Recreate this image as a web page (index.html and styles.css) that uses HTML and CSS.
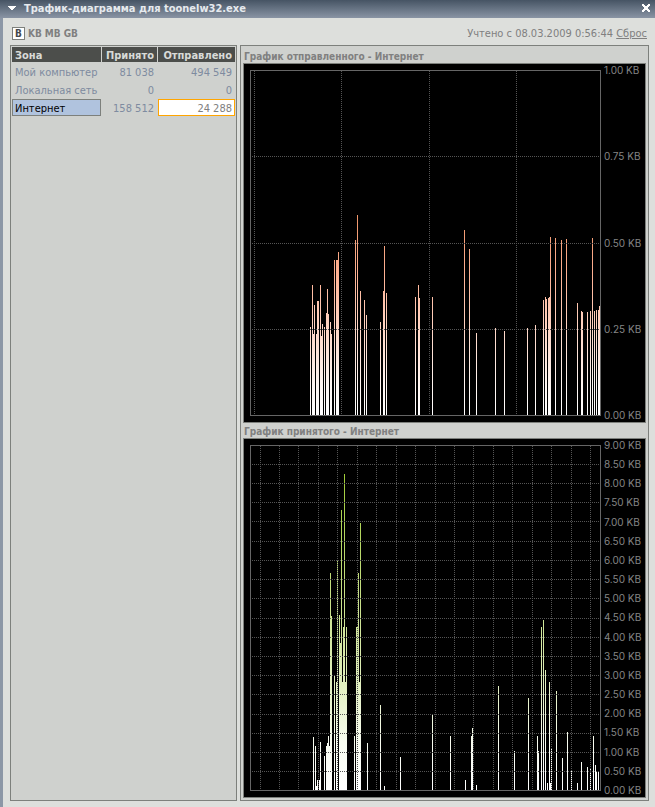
FILE: index.html
```html
<!DOCTYPE html>
<html lang="ru">
<head>
<meta charset="utf-8">
<meta name="viewport" content="width=device-width, initial-scale=1">
<title>Трафик-диаграмма для toonelw32.exe</title>
<link rel="stylesheet" href="styles.css">
</head>
<body>
<header class="titlebar">
  <button class="titlebar-button" type="button" aria-label="Меню">
    <svg width="8" height="5" viewBox="0 0 8 5" shape-rendering="crispEdges"><path d="M0 0h8v1h-1v1h-1v1h-1v1h-2v-1h-1v-1h-1v-1h-1z"/></svg>
  </button>
  <h1 class="titlebar-title">Трафик-диаграмма для toonelw32.exe</h1>
  <button class="titlebar-button" type="button" aria-label="Закрыть">
    <svg width="8" height="8" viewBox="0 0 8 8" shape-rendering="crispEdges"><path d="M0 0h2v1h1v1h2v-1h1v-1h2v2h-1v1h-1v2h1v1h1v2h-2v-1h-1v-1h-2v1h-1v1h-2v-2h1v-1h1v-2h-1v-1h-1z"/></svg>
  </button>
</header>
<main class="window">
  <div class="toolbar">
    <div class="units">
      <button class="unit unit-active" type="button" aria-pressed="true">B</button>
      <button class="unit" type="button">KB</button>
      <button class="unit" type="button">MB</button>
      <button class="unit" type="button">GB</button>
    </div>
    <p class="since">Учтено с 08.03.2009 0:56:44 <a href="#reset">Сброс</a></p>
  </div>
  <div class="content">
    <section class="panel zones">
      <table class="zone-table">
        <thead>
          <tr><th class="col-zone">Зона</th><th class="col-in">Принято</th><th>Отправлено</th></tr>
        </thead>
        <tbody>
          <tr><td>Мой компьютер</td><td>81 038</td><td>494 549</td></tr>
          <tr><td>Локальная сеть</td><td>0</td><td>0</td></tr>
          <tr><td class="selected">Интернет</td><td>158 512</td><td class="current">24 288</td></tr>
        </tbody>
      </table>
    </section>
    <section class="panel charts">
      <h2 class="chart-title">График отправленного - Интернет</h2>
      <div class="chart">
        <svg class="plot" id="sent" viewBox="250 70 351 346" preserveAspectRatio="none" shape-rendering="crispEdges">
          <defs>
            <linearGradient id="sent-fill" gradientUnits="userSpaceOnUse" x1="0" y1="415" x2="0" y2="215">
              <stop offset="0" stop-color="#ffffff"/>
              <stop offset="0.15" stop-color="#fff6f2"/>
              <stop offset="0.4" stop-color="#ffd9ca"/>
              <stop offset="0.7" stop-color="#ffb294"/>
              <stop offset="1" stop-color="#ee9468"/>
            </linearGradient>
          </defs>
        </svg>
        <ol class="axis">
          <li>1.00 KB</li><li>0.75 KB</li><li>0.50 KB</li><li>0.25 KB</li><li>0.00 KB</li>
        </ol>
      </div>
      <h2 class="chart-title">График принятого - Интернет</h2>
      <div class="chart">
        <svg class="plot" id="received" viewBox="250 445 351 346" preserveAspectRatio="none" shape-rendering="crispEdges">
          <defs>
            <linearGradient id="received-fill" gradientUnits="userSpaceOnUse" x1="0" y1="790" x2="0" y2="474">
              <stop offset="0" stop-color="#ffffff"/>
              <stop offset="0.15" stop-color="#f8fcf0"/>
              <stop offset="0.35" stop-color="#e0efbc"/>
              <stop offset="0.6" stop-color="#c8e088"/>
              <stop offset="1" stop-color="#a0cc38"/>
            </linearGradient>
          </defs>
        </svg>
        <ol class="axis">
          <li>9.00 KB</li><li>8.50 KB</li><li>8.00 KB</li><li>7.50 KB</li><li>7.00 KB</li><li>6.50 KB</li><li>6.00 KB</li><li>5.50 KB</li><li>5.00 KB</li><li>4.50 KB</li><li>4.00 KB</li><li>3.50 KB</li><li>3.00 KB</li><li>2.50 KB</li><li>2.00 KB</li><li>1.50 KB</li><li>1.00 KB</li><li>0.50 KB</li><li>0.00 KB</li>
        </ol>
      </div>
    </section>
  </div>
</main>
<script src="charts.js"></script>
</body>
</html>
```
FILE: styles.css
```css
* {
  box-sizing: border-box;
}

body {
  display: flex;
  flex-direction: column;
  min-height: 100vh;
  margin: 0;
  background: #dddfdc;
  color: #808080;
  font: 11px/13px "DejaVu Sans Condensed", "DejaVu Sans", sans-serif;
}

h1, h2, p, ol {
  margin: 0;
  padding: 0;
}

button {
  border: 0;
  padding: 0;
  background: none;
  color: inherit;
  font: inherit;
}

.titlebar {
  display: flex;
  align-items: center;
  gap: 8px;
  height: 18px;
  padding: 0 5px 0 8px;
  background: linear-gradient(#465464, #8994a4);
  color: #e6eaee;
}

.titlebar-button {
  display: flex;
  padding-bottom: 2px;
}

.titlebar-button svg {
  fill: #ffffff;
}

.titlebar-title {
  flex: 1;
  font-size: 11px;
  line-height: 18px;
  white-space: nowrap;
}

.window {
  flex: 1;
  display: flex;
  flex-direction: column;
  gap: 5px;
  padding: 9px 6px 6px 7px;
  border-left: 3px solid #8c97a6;
}

.toolbar {
  display: flex;
  justify-content: space-between;
  height: 13px;
  padding: 0 2px;
}

.units {
  display: flex;
  gap: 3px;
  font-size: 10px;
  font-weight: bold;
}

.unit-active {
  width: 13px;
  border: 1px solid #7d807c;
  background: #ffffff;
  color: #44484c;
  line-height: 11px;
}

.since a {
  color: inherit;
}

.content {
  flex: 1;
  display: flex;
  gap: 3px;
}

.panel {
  border: 1px solid #7d807c;
  background: #cfd1ce;
}

.zones {
  flex: 0 0 227px;
}

.zone-table {
  width: 100%;
  table-layout: fixed;
  border-spacing: 1px;
  color: #7e8ba0;
  text-align: right;
}

.zone-table th,
.zone-table td {
  height: 17px;
  padding: 2px 3px 0;
  line-height: 13px;
  white-space: nowrap;
}

.zone-table th {
  height: 15px;
  background: #4c4e4b;
  color: #d8dad7;
}

.zone-table th:first-child,
.zone-table td:first-child {
  text-align: left;
}

.col-zone {
  width: 89px;
}

.col-in {
  width: 55px;
}

.zone-table .selected {
  padding: 2px 2px 0;
  border: 1px solid #7d807c;
  background: #b0c3de;
  color: #000000;
}

.zone-table .current {
  padding: 2px 2px 0;
  border: 1px solid #ffa500;
  background: #ffffff;
  color: #808080;
}

.charts {
  flex: 1;
  display: flex;
  flex-direction: column;
  padding: 2px;
}

.chart-title {
  padding: 2px 0 0 1px;
  font-size: 10px;
  line-height: 13px;
}

.chart {
  flex: 1;
  display: flex;
  min-height: 240px;
  border: 1px solid #7d807c;
  background: #000000;
}

.plot {
  flex: 1;
  width: 0;
  height: auto;
  margin: 6px 0 6px 6px;
}

.axis {
  display: flex;
  flex-direction: column;
  justify-content: space-between;
  width: 44px;
  padding-left: 3px;
  color: #858585;
  font: 10px/13px Inter, "Liberation Sans", sans-serif;
  list-style: none;
  white-space: nowrap;
}

.frame {
  fill: none;
  stroke: #666666;
}

.grid {
  fill: none;
  stroke: #555555;
  stroke-dasharray: 1 1;
}
```
FILE: charts.js
```js
// Each bar is [x, top] in the coordinates of the chart's viewBox.
const charts = {
  sent: {
    columns: [254, 341, 429, 516],
    rows: [156, 243, 329],
    bars: [
      [310, 327], [312, 285], [313, 334], [314, 305], [316, 334], [317, 301], [318, 301], [320, 285],
      [321, 336], [322, 324], [324, 327], [326, 313], [327, 289], [328, 314], [330, 322], [331, 334],
      [334, 260], [336, 260], [337, 260], [338, 252], [355, 240], [357, 215], [360, 291], [364, 300],
      [366, 315], [380, 322], [383, 291], [384, 246], [386, 293], [415, 297], [418, 285], [419, 298],
      [432, 297], [464, 230], [469, 249], [476, 333], [495, 328], [504, 331], [527, 328], [535, 325],
      [543, 300], [545, 297], [546, 299], [548, 298], [549, 297], [550, 237], [555, 238], [561, 240],
      [566, 239], [577, 303], [581, 311], [582, 312], [587, 312], [590, 311], [592, 238], [594, 311],
      [596, 310], [598, 310], [599, 306]
    ]
  },
  received: {
    columns: [260, 279, 298, 318, 337, 357, 376, 396, 415, 435, 454, 473, 493, 512, 532, 551, 571, 590],
    rows: [464, 483, 502, 521, 541, 560, 579, 598, 618, 637, 656, 675, 694, 714, 733, 752, 771],
    bars: [
      [313, 737], [315, 746], [316, 786], [317, 780], [319, 780], [320, 742], [324, 756], [326, 746],
      [327, 743], [328, 736], [329, 746], [330, 573], [331, 616], [334, 676], [336, 682], [337, 561],
      [339, 615], [340, 643], [341, 510], [342, 682], [343, 627], [344, 474], [345, 682], [346, 627],
      [354, 736], [356, 627], [357, 627], [358, 573], [359, 682], [360, 523], [367, 743], [380, 705],
      [384, 786], [400, 757], [432, 715], [450, 736], [465, 780], [471, 736], [472, 728], [476, 785],
      [498, 686], [514, 751], [528, 698], [537, 736], [538, 751], [541, 627], [543, 620], [545, 670],
      [547, 783], [549, 682], [550, 783], [551, 748], [556, 691], [562, 758], [567, 732], [571, 770],
      [577, 783], [581, 762], [587, 767], [590, 768], [593, 736], [595, 765], [596, 772], [598, 772]
    ]
  }
};

for (const [id, chart] of Object.entries(charts)) {
  const svg = document.getElementById(id);
  const { x, y, width, height } = svg.viewBox.baseVal;
  const bottom = y + height - 1;

  const add = (name, attributes) => {
    const element = document.createElementNS("http://www.w3.org/2000/svg", name);
    for (const [key, value] of Object.entries(attributes)) {
      element.setAttribute(key, value);
    }
    svg.append(element);
  };

  add("path", {
    fill: `url(#${id}-fill)`,
    d: chart.bars.map(([left, top]) => `M${left} ${top}h1V${bottom}h-1z`).join("")
  });
  add("path", {
    class: "grid",
    d: chart.columns.map(column => `M${column + 0.5} ${y + 1}V${bottom}`).join("") +
      chart.rows.map(row => `M${x + 2} ${row + 0.5}H${x + width - 1}`).join("")
  });
  add("rect", { class: "frame", x: x + 0.5, y: y + 0.5, width: width - 1, height: height - 1 });
}
```
